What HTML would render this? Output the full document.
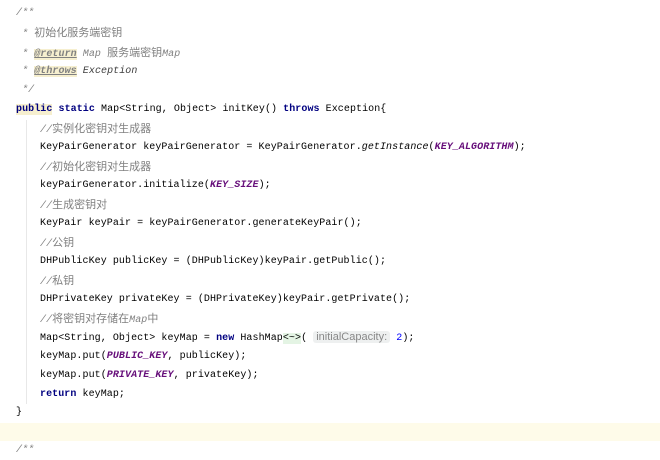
<!DOCTYPE html>
<html><head><meta charset="utf-8"><style>
body{margin:0;width:660px;height:450px;background:#fff;overflow:hidden;position:relative;font-family:"Liberation Mono","Noto Sans CJK SC",monospace;font-size:10px;letter-spacing:0.07px;color:#000}
.l{position:absolute;left:0;height:19px;line-height:19px;white-space:pre}
.c{color:#808080;font-style:italic}
.cj{color:#808080;font-family:"Noto Sans CJK SC",sans-serif;font-size:11px;font-style:normal;letter-spacing:0}
.k{color:#000080;font-weight:bold}
.p{color:#660e7a;font-weight:bold;font-style:italic}
.tag{color:#808080;font-weight:bold;text-decoration:underline;background:#f6efcf;font-style:italic}
.hint{font-family:"Liberation Sans",sans-serif;color:#888;background:#eef0f0;border-radius:3px;padding:0 3px;font-size:11px;letter-spacing:0}
.cur{position:absolute;left:0;top:423px;width:660px;height:18px;background:#fefbe9}
.guide{position:absolute;left:26px;top:120px;width:1px;height:284px;background:#e8e8e8}
</style></head><body>
<div class="cur"></div>
<div class="guide"></div>
<div class="l c" style="top:4px;left:16px">/**</div>
<div class="l c" style="top:23px;left:16px"> * <span class="cj">初始化服务端密钥</span></div>
<div class="l c" style="top:43px;left:16px"> * <span class="tag">@return</span> Map <span class="cj">服务端密钥</span>Map</div>
<div class="l c" style="top:62px;left:16px"> * <span class="tag">@throws</span> <span style="color:#3d3d3d">Exception</span></div>
<div class="l c" style="top:81px;left:16px"> */</div>
<div class="l" style="top:100px;left:16px"><span class="k" style="background:#f6efcf">public</span> <span class="k">static</span> Map&lt;String, Object&gt; initKey() <span class="k">throws</span> Exception{</div>
<div class="l c" style="top:119px;left:40px">//<span class="cj">实例化密钥对生成器</span></div>
<div class="l" style="top:138px;left:40px">KeyPairGenerator keyPairGenerator = KeyPairGenerator.<i>getInstance</i>(<span class="p">KEY_ALGORITHM</span>);</div>
<div class="l c" style="top:157px;left:40px">//<span class="cj">初始化密钥对生成器</span></div>
<div class="l" style="top:176px;left:40px">keyPairGenerator.initialize(<span class="p">KEY_SIZE</span>);</div>
<div class="l c" style="top:195px;left:40px">//<span class="cj">生成密钥对</span></div>
<div class="l" style="top:214px;left:40px">KeyPair keyPair = keyPairGenerator.generateKeyPair();</div>
<div class="l c" style="top:233px;left:40px">//<span class="cj">公钥</span></div>
<div class="l" style="top:252px;left:40px">DHPublicKey publicKey = (DHPublicKey)keyPair.getPublic();</div>
<div class="l c" style="top:271px;left:40px">//<span class="cj">私钥</span></div>
<div class="l" style="top:290px;left:40px">DHPrivateKey privateKey = (DHPrivateKey)keyPair.getPrivate();</div>
<div class="l c" style="top:309px;left:40px">//<span class="cj">将密钥对存储在</span>Map<span class="cj">中</span></div>
<div class="l" style="top:328px;left:40px">Map&lt;String, Object&gt; keyMap = <span class="k">new</span> HashMap<span style="background:#e4f4e4">&lt;~&gt;</span>( <span class="hint">initialCapacity:</span> <span style="color:#0000ff">2</span>);</div>
<div class="l" style="top:347px;left:40px">keyMap.put(<span class="p">PUBLIC_KEY</span>, publicKey);</div>
<div class="l" style="top:366px;left:40px">keyMap.put(<span class="p">PRIVATE_KEY</span>, privateKey);</div>
<div class="l" style="top:385px;left:40px"><span class="k">return</span> keyMap;</div>
<div class="l" style="top:403px;left:16px">}</div>
<div class="l c" style="top:441px;left:16px">/**</div>
</body></html>
